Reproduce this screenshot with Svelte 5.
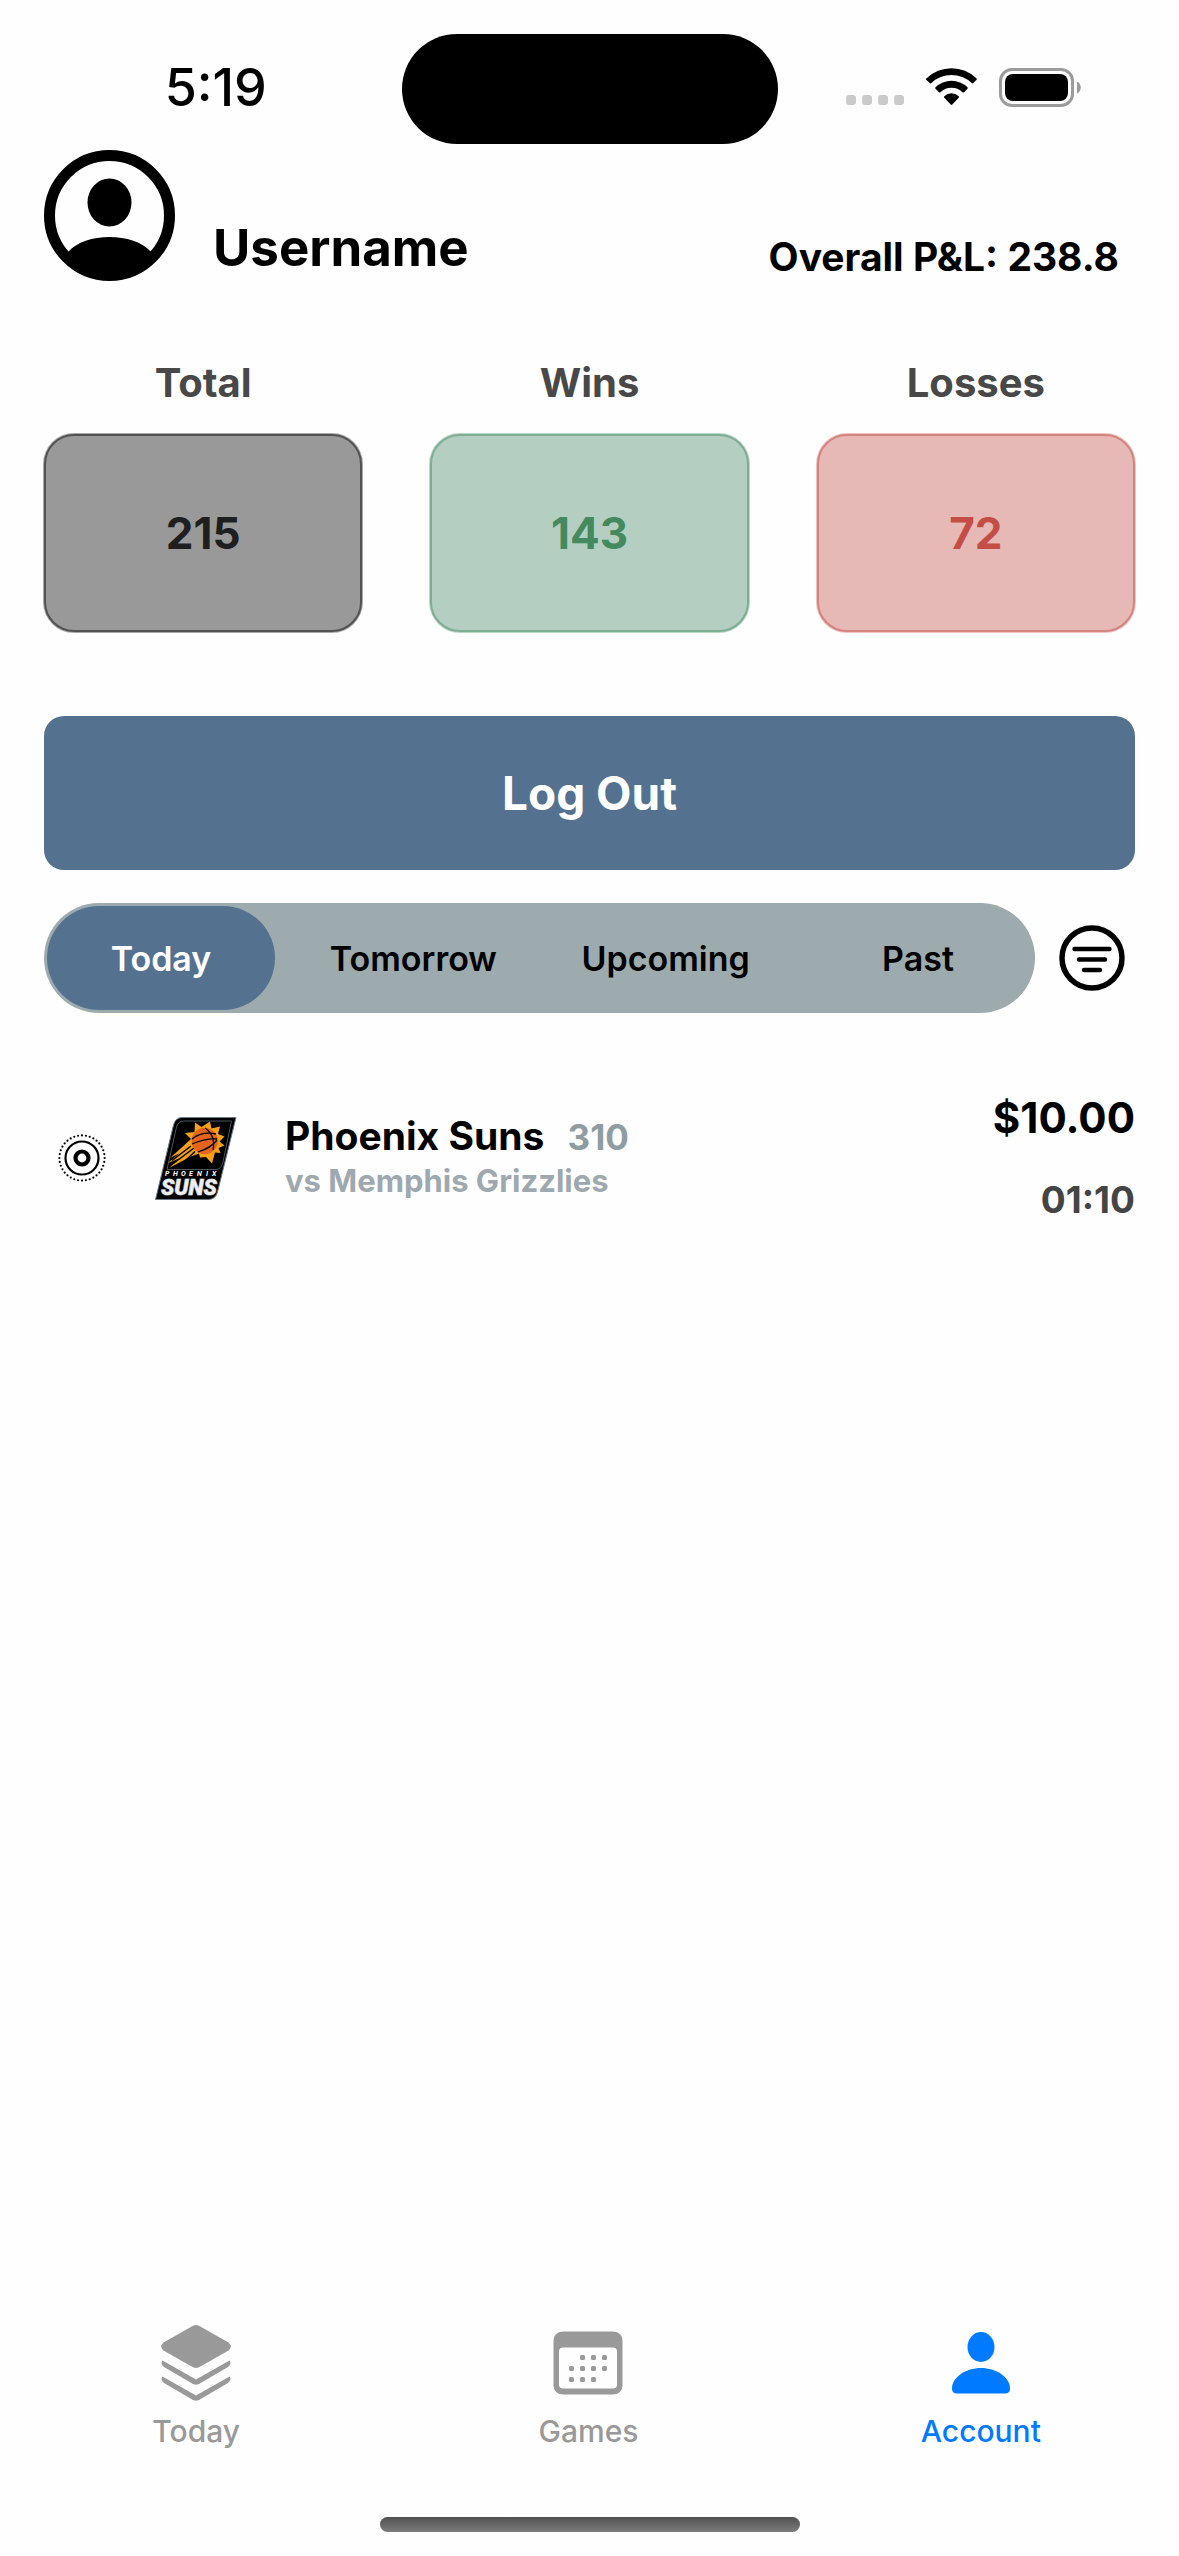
<script lang="ts">
  const stats = [
    { label: 'Total', value: 215, tone: 'neutral' },
    { label: 'Wins', value: 143, tone: 'win' },
    { label: 'Losses', value: 72, tone: 'loss' },
  ];
  const ranges = ['Today', 'Tomorrow', 'Upcoming', 'Past'];
  let range = $state('Today');

  const liveDots = Array.from({ length: 36 }, (_, i) => {
    const a = (i * Math.PI) / 18;
    return { x: 25 + 22.6 * Math.cos(a), y: 25 + 22.6 * Math.sin(a) };
  });

  const calendarDots = [
    [30, 30], [41, 30], [52, 30],
    [19, 41], [30, 41], [41, 41], [52, 41],
    [19, 52], [30, 52], [41, 52],
  ];
</script>

<div class="screen">
  <div class="status">
    <div class="time">5:19</div>
    <div class="island"></div>
    <div class="signals">
      <svg width="58" height="38" viewBox="0 0 58 38" aria-hidden="true">
        <g fill="#cbcbcb">
          <rect x="0" y="27" width="10" height="10" rx="3" />
          <rect x="16" y="27" width="10" height="10" rx="3" />
          <rect x="32" y="27" width="10" height="10" rx="3" />
          <rect x="48" y="27" width="10" height="10" rx="3" />
        </g>
      </svg>
      <svg width="51" height="38" viewBox="0 0 51 38" aria-hidden="true">
        <path d="M0.6 10.3a35.6 35.6 0 0 1 49.8 0q.8.8 0 1.6l-3.2 3.2q-.8.8-1.6 0a29 29 0 0 0-40.2 0q-.8.8-1.6 0l-3.4-3.2q-.8-.8 0-1.6z" />
        <path d="M9.5 19.2a23 23 0 0 1 32 0q.8.8 0 1.6l-3.4 3.4q-.8.8-1.6 0a16 16 0 0 0-22 0q-.8.8-1.6 0l-3.4-3.4q-.8-.8 0-1.6z" />
        <path d="M18.3 28.2a10.5 10.5 0 0 1 14.4 0q.8.8 0 1.6l-6.4 6.7q-.8.8-1.6 0l-6.4-6.7q-.8-.8 0-1.6z" />
      </svg>
      <svg width="82" height="39" viewBox="0 0 82 39" aria-hidden="true">
        <rect x="1.5" y="1.5" width="72" height="36" rx="11.5" fill="none" stroke="#9b9b9b" stroke-width="3" />
        <rect x="6" y="6" width="63" height="27" rx="8" fill="#000" />
        <path d="M78 13.5c5 2 5 10 0 12z" fill="#9b9b9b" />
      </svg>
    </div>
  </div>

  <main>
    <header>
      <svg width="131" height="131" viewBox="0 0 131 131" aria-hidden="true">
        <circle cx="65.5" cy="65.5" r="60" fill="none" stroke="#000" stroke-width="11" />
        <ellipse cx="65.5" cy="52.5" rx="22" ry="24" />
        <path d="M24 102C41 82 90 82 107 102L112 107A63 63 0 0 1 19 107z" />
      </svg>
      <h1>Username</h1>
      <p class="pnl">Overall P&amp;L: 238.8</p>
    </header>

    <section class="stats">
      {#each stats as s}
        <div class="stat">
          <h2>{s.label}</h2>
          <div class="box {s.tone}">{s.value}</div>
        </div>
      {/each}
    </section>

    <button class="logout" type="button">Log Out</button>

    <div class="filters">
      <div class="segments">
        {#each ranges as r}
          <button type="button" class:active={range === r} aria-pressed={range === r} onclick={() => (range = r)}>{r}</button>
        {/each}
      </div>
      <button class="filter" type="button" aria-label="Filter">
        <svg width="66" height="66" viewBox="0 0 66 66" fill="none" stroke="#000" stroke-linecap="round" aria-hidden="true">
          <circle cx="33" cy="33" r="30" stroke-width="5.5" />
          <path d="M15.5 24h35M20 34.5h26M25 45h16" stroke-width="4.4" />
        </svg>
      </button>
    </div>

    <article class="bet">
      <svg width="50" height="50" viewBox="0 0 50 50" aria-hidden="true">
        {#each liveDots as d}
          <circle cx={d.x} cy={d.y} r="1.1" />
        {/each}
        <circle cx="25" cy="25" r="16.5" fill="none" stroke="#000" stroke-width="2.2" />
        <circle cx="25" cy="25" r="6.5" fill="none" stroke="#000" stroke-width="4.2" />
      </svg>
      <svg class="crest" width="82" height="83" viewBox="0 0 82 83" role="img" aria-label="Phoenix Suns">
        <path d="M27 .5H81L62.5 75Q60.5 82.5 53 82.5H.5L18.5 8Q20.5.5 27 .5z" fill="#000" stroke="#6b7c87" stroke-width="1" />
        <path d="M29 4H76.5L68 45Q66 52.5 61 52.5H12L21.5 10Q23 4 29 4z" fill="none" stroke="#5c6b75" stroke-width=".8" />
        <path d="M40 5.5l6.5 4.5L55 4.5l1.5 7L65 9.500l-2 7.500 6.500 2.500-5 5 5 4-6 2.500 2 5-5.500-.5-3 11-6-6.500-6 .5-1-4-8 3L14 51l10-9.500L13 46l11-9.500L15 41l15-13.500 6-5.500-6-6 9.500-1z" fill="#f5a01a" />
        <path d="M17 43.500L36 29M15 49l24-18M23 50.500l17-16" stroke="#000" stroke-width="1.500" fill="none" />
        <circle cx="49.700" cy="24" r="13.200" fill="#e4631f" />
        <path d="M37 22q10-8 24-5M43 35q13-4 19-12M37 27q14-6 25-5M50 11q11 8 8 22" fill="none" stroke="#000" stroke-width="1.300" />
        <text class="crest-small" x="10 18 26 34 42 51 57" y="59">PHOENIX</text>
        <text class="crest-large" x="6" y="78">SUNS</text>
      </svg>
      <div class="match">
        <p class="team">Phoenix Suns <span>310</span></p>
        <p class="versus">vs Memphis Grizzlies</p>
      </div>
      <div class="stake">
        <p class="amount">$10.00</p>
        <p class="clock">01:10</p>
      </div>
    </article>
  </main>

  <nav>
    <a href="#today">
      <svg width="76" height="76" viewBox="0 0 76 76" fill="currentColor" aria-hidden="true">
        <path d="M35 .8q3-1.4 6 0L70.500 17.500q4.500 4 0 8L41 42.300q-3 1.500-6 0L5.500 25.500q-4.500-4 0-8z" />
        <path d="M4.500 35.500L38 54.500l33.500-19q2.500 3.500-1.500 6.500L41 59q-3 1.600-6 0L6 42q-4-3-1.500-6.500z" />
        <path d="M4.500 51.500L38 70.500l33.500-19q2.500 3.500-1.500 6.500L41 75q-3 1.600-6 0L6 58q-4-3-1.500-6.500z" />
      </svg>
      Today
    </a>
    <a href="#games">
      <svg width="76" height="76" viewBox="0 0 76 76" fill="currentColor" aria-hidden="true">
        <path fill-rule="evenodd" d="M14 6.500H62Q72.500 6.500 72.500 16V60Q72.500 69.500 62 69.500H14Q3.500 69.500 3.500 60V16Q3.500 6.500 14 6.500zM13 22.500Q9 22.500 9 26.500V59.500Q9 63.500 13 63.500H63Q67 63.500 67 59.500V26.500Q67 22.500 63 22.500z" />
        {#each calendarDots as [x, y]}
          <rect {x} {y} width="5" height="5" rx="1.5" />
        {/each}
      </svg>
      Games
    </a>
    <a href="#account" class="current" aria-current="page">
      <svg width="76" height="76" viewBox="0 0 76 76" fill="currentColor" aria-hidden="true">
        <ellipse cx="38" cy="22" rx="13.5" ry="15" />
        <path d="M38 43C53 43 67 52 67 63.500Q67 68.500 62 68.500H14Q9 68.500 9 63.500C9 52 23 43 38 43z" />
      </svg>
      Account
    </a>
  </nav>
  <div class="home"></div>
</div>

<style>
  :global(body) {
    background: #fefefe;
  }
  .screen {
    box-sizing: border-box;
    min-height: 100vh;
    display: flex;
    flex-direction: column;
    font-family: Inter, 'Liberation Sans', sans-serif;
    color: #000;
  }
  h1, h2, p {
    margin: 0;
    font-weight: 700;
  }
  button {
    font: inherit;
    border: 0;
    padding: 0;
    background: none;
    cursor: pointer;
  }
  svg {
    display: block;
    flex: none;
  }

  .status {
    display: grid;
    grid-template-columns: 1fr 376px 1fr;
    align-items: center;
    padding-top: 34px;
  }
  .time {
    padding: 0 0 3px 30px;
    text-align: center;
    font-size: 52px;
    line-height: 60px;
    font-weight: 500;
  }
  .island {
    height: 110px;
    border-radius: 55px;
    background: #000;
  }
  .signals {
    display: flex;
    justify-content: center;
    gap: 22px;
    padding: 0 30px 3px 0;
  }

  main {
    flex: 1;
    padding: 6px 44px 0;
  }
  header {
    display: flex;
    align-items: flex-end;
  }
  h1 {
    flex: 1;
    padding: 0 0 3px 38px;
    font-size: 51px;
    line-height: 60px;
  }
  .pnl {
    padding-right: 16px;
    font-size: 39px;
    line-height: 48px;
  }

  .stats {
    display: grid;
    grid-template-columns: repeat(3, 1fr);
    gap: 68px;
    margin-top: 78px;
    text-align: center;
  }
  h2 {
    color: #484848;
    font-size: 40px;
    line-height: 48px;
    margin-bottom: 27px;
  }
  .box {
    box-sizing: border-box;
    height: 198px;
    display: grid;
    place-items: center;
    border: 2px solid;
    border-radius: 30px;
    font-size: 44px;
    line-height: 56px;
    font-weight: 700;
  }
  .neutral {
    color: #1f1f1f;
    background: #999999;
    border-color: #525252;
    box-shadow: 0 0 0 1px #aaaaaa;
  }
  .win {
    color: #448a5e;
    background: #b4cfc1;
    border-color: #7dae93;
    box-shadow: 0 0 0 1px #b9d5c5;
  }
  .loss {
    color: #c44d46;
    background: #e6b9b6;
    border-color: #d4837f;
    box-shadow: 0 0 0 1px #edc4c2;
  }

  .logout {
    display: block;
    width: 100%;
    height: 154px;
    margin-top: 84px;
    border-radius: 20px;
    background: #54728f;
    color: #fff;
    font-size: 46px;
    font-weight: 700;
  }

  .filters {
    display: flex;
    align-items: center;
    gap: 24px;
    margin-top: 33px;
  }
  .segments {
    flex: 1;
    display: flex;
    justify-content: space-between;
    padding: 3px;
    border-radius: 55px;
    background: #9daaae;
  }
  .segments button {
    width: 228px;
    height: 104px;
    border-radius: 52px;
    font-size: 34px;
    font-weight: 600;
    color: #000;
  }
  .segments .active {
    background: #54728f;
    color: #fff;
  }
  .filter {
    margin-right: 10px;
  }

  .bet {
    display: flex;
    align-items: center;
    margin-top: 81px;
    padding-left: 13px;
  }
  .crest {
    margin-left: 48px;
  }
  .crest-small {
    font: italic 700 7px Roboto, sans-serif;
    fill: #fff;
  }
  .crest-large {
    font: italic 900 22px Roboto, sans-serif;
    fill: #eee;
    stroke: #8d9499;
    stroke-width: 1px;
    paint-order: stroke;
  }
  .match {
    flex: 1;
    margin-left: 48px;
  }
  .team {
    font-size: 39px;
    line-height: 44px;
  }
  .team span {
    margin-left: 14px;
    font-size: 35px;
    color: #8f9da3;
  }
  .versus {
    font-size: 31px;
    line-height: 44px;
    color: #9ea9af;
  }
  .stake {
    text-align: right;
  }
  .amount {
    font-size: 42px;
    line-height: 48px;
    margin-bottom: 36px;
  }
  .clock {
    font-size: 37px;
    line-height: 44px;
    color: #444;
  }

  nav {
    display: grid;
    grid-template-columns: repeat(3, 1fr);
    padding-right: 2px;
    margin-bottom: 68px;
  }
  nav a {
    display: flex;
    flex-direction: column;
    align-items: center;
    gap: 12px;
    color: #999;
    font-size: 30px;
    line-height: 36px;
    font-weight: 500;
    text-decoration: none;
  }
  nav .current {
    color: #007aff;
  }
  .home {
    width: 420px;
    height: 15px;
    margin: 0 auto 24px;
    border-radius: 8px;
    background: linear-gradient(#505050, #7c7c7c);
  }
</style>
